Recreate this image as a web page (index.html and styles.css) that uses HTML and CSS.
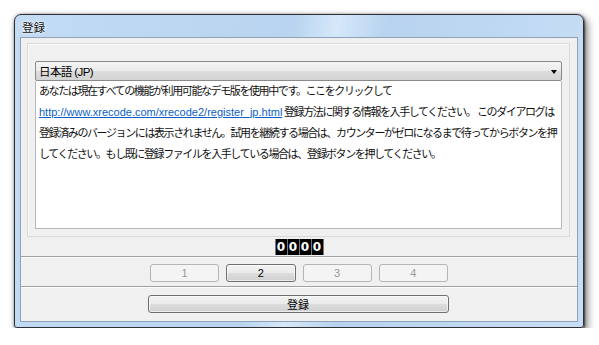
FILE: index.html
```html
<!DOCTYPE html>
<html lang="ja">
  <head>
    <meta charset="UTF-8" />
    <title>登録</title>
    <link rel="stylesheet" href="styles.css">
  </head>
  <body>
    <div class="window">
      <div class="titlebar">登録</div>
      <div class="client">
        <div class="group">
          <div class="combo">
            <span>日本語 (JP)</span>
            <span class="arrow"></span>
          </div>
          <div class="memo">
            あなたは現在すべての機能が利用可能なデモ版を使用中です。ここをクリックして<br>
            <a class="link" href="#">http://www.xrecode.com/xrecode2/register_jp.html</a> 登録方法に関する情報を入手してください。 このダイアログは<br>
            登録済みのバージョンには表示されません。試用を継続する場合は、カウンターがゼロになるまで待ってからボタンを押<br>
            してください。もし既に登録ファイルを入手している場合は、登録ボタンを押してください。
          </div>
        </div>

        <div class="counter-row">
          <div class="counter">
            <span>0</span><span>0</span><span>0</span><span>0</span>
          </div>
        </div>

        <div class="buttons-row">
          <div class="buttons">
            <button class="btn" disabled>1</button>
            <button class="btn">2</button>
            <button class="btn" disabled>3</button>
            <button class="btn" disabled>4</button>
          </div>
        </div>

        <div class="register-row">
          <button class="btn register">登録</button>
        </div>
      </div>
    </div>
  </body>
</html>
```

FILE: styles.css
```css
*,
*::before,
*::after {
  margin: 0;
  padding: 0;
  box-sizing: border-box;
}

body {
  background: #fff;
  font-family: "Liberation Sans", "Noto Sans CJK JP", sans-serif;
  font-size: 11px;
  color: #000;
}

.window {
  margin: 14px 0 0 14px;
  width: 570px;
  height: 314px;
  border: 1px solid #2e3033;
  border-radius: 7px 7px 3px 3px;
  background: linear-gradient(100deg, #c3dbf4 0%, #b9d4f0 45%, #d6e8f9 52%, #b8d3ef 60%, #c8def5 100%);
  box-shadow: 3px 4px 8px rgba(0, 0, 0, 0.55), 1px 1px 2px rgba(0, 0, 0, 0.5), 0 0 3px rgba(0, 0, 0, 0.3);
  padding: 0 5px 5px 5px;
  display: flex;
  flex-direction: column;
}

.titlebar {
  height: 22px;
  line-height: 22px;
  padding: 2px 0 0 2px;
  font-size: 11.5px;
  color: #111;
  text-shadow: 0 0 4px #fff, 0 0 2px #fff;
}

.client {
  flex: 1;
  background: #f0f0f0;
  border: 1px solid #8ea2b8;
  display: flex;
  flex-direction: column;
}

.group {
  margin: 5px 7px 0 6px;
  border: 1px solid #dadada;
  box-shadow: inset 1px 1px 0 #fbfbfb;
  padding: 17px 7px 7px 7px;
}

.combo {
  height: 20px;
  border: 1px solid #8a8a8a;
  border-radius: 2px;
  background: linear-gradient(#f4f4f4 0%, #ebebeb 50%, #dddddd 51%, #d4d4d4 100%);
  display: flex;
  align-items: center;
  justify-content: space-between;
  padding: 0 4px 0 3px;
  font-size: 11.5px;
  letter-spacing: -0.6px;
}

.arrow {
  width: 0;
  height: 0;
  border-left: 3.5px solid transparent;
  border-right: 3.5px solid transparent;
  border-top: 4px solid #000;
  margin-top: 1px;
}

.memo {
  height: 148px;
  background: #fff;
  border: 1px solid #b5b9bf;
  border-top: none;
  padding: 0 3px;
  line-height: 21px;
  white-space: nowrap;
  overflow: hidden;
  letter-spacing: -1.4px;
  color: #111;
}

.link {
  color: #0b5fc7;
  letter-spacing: 0;
}

.counter-row {
  display: flex;
  justify-content: center;
  padding-top: 1px;
  height: 20px;
  border-bottom: 1px solid #a0a0a0;
}

.counter {
  display: flex;
  gap: 1px;
  background: #777;
  padding: 0 1px;
  height: 16px;
  margin-top: 1px;
}

.counter span {
  width: 11px;
  background: #000;
  color: #fff;
  font-family: "DejaVu Sans", sans-serif;
  font-size: 12px;
  font-weight: bold;
  line-height: 16px;
  text-align: center;
}

.buttons-row {
  height: 30px;
  border-top: 1px solid #fdfdfd;
  border-bottom: 1px solid #a0a0a0;
  display: flex;
  justify-content: center;
  padding-top: 6px;
}

.buttons {
  width: 298px;
  display: grid;
  grid-template-columns: repeat(4, 1fr);
  gap: 7px;
}

.btn {
  height: 18px;
  font-family: "Liberation Sans", "Noto Sans CJK JP", sans-serif;
  font-size: 11px;
  color: #000;
  border: 1px solid #707070;
  border-radius: 3px;
  background: linear-gradient(#f2f2f2 0%, #ebebeb 50%, #dddddd 51%, #cfcfcf 100%);
  box-shadow: inset 0 0 0 1px rgba(255, 255, 255, 0.6);
}

.btn:disabled {
  color: #9a9a9a;
  border-color: #b5b5b5;
  background: #f4f4f4;
  box-shadow: none;
}

.register-row {
  border-top: 1px solid #fdfdfd;
  display: flex;
  justify-content: center;
  padding-top: 7px;
}

.register {
  width: 301px;
  margin-left: -2px;
}
```
